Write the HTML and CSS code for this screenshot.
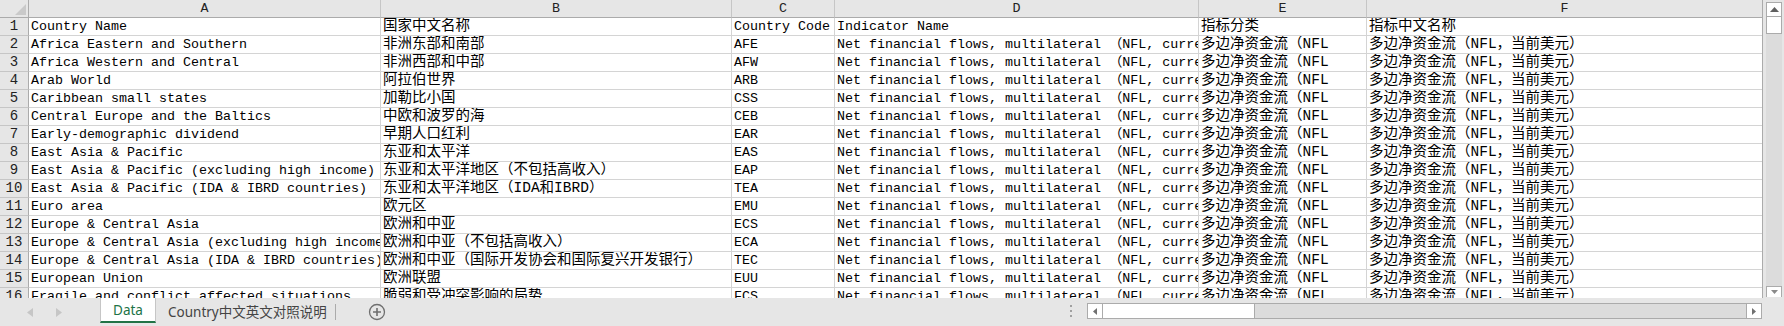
FILE: index.html
```html
<!DOCTYPE html>
<html lang="zh-CN">
<head>
    <meta charset="UTF-8">
    <title>Data - 多边净资金流</title>
    <link rel="stylesheet" href="styles.css">
</head>
<body>
    <div class="sheet">
        <div class="grid-area">
            <div class="grid">
                <table class="cells">
                    <colgroup>
                        <col class="col-rh">
                        <col class="col-a">
                        <col class="col-b">
                        <col class="col-c">
                        <col class="col-d">
                        <col class="col-e">
                        <col class="col-f">
                    </colgroup>
                    <thead>
                        <tr>
                            <th class="corner">
                                <svg width="11" height="11" viewBox="0 0 11 11"><polygon points="11,0 11,11 0,11" fill="#c9c9c9"/></svg>
                            </th>
                            <th>A</th><th>B</th><th>C</th><th>D</th><th>E</th><th>F</th>
                        </tr>
                    </thead>
                    <tbody>
                        <tr><th>1</th><td>Country Name</td><td class="cn">国家中文名称</td><td>Country Code</td><td>Indicator Name</td><td class="cn">指标分类</td><td class="cn">指标中文名称</td></tr>
                        <tr><th>2</th><td>Africa Eastern and Southern</td><td class="cn">非洲东部和南部</td><td>AFE</td><td>Net financial flows, multilateral （NFL, current US$）</td><td class="cn">多边净资金流（NFL</td><td class="cn">多边净资金流（NFL，当前美元）</td></tr>
                        <tr><th>3</th><td>Africa Western and Central</td><td class="cn">非洲西部和中部</td><td>AFW</td><td>Net financial flows, multilateral （NFL, current US$）</td><td class="cn">多边净资金流（NFL</td><td class="cn">多边净资金流（NFL，当前美元）</td></tr>
                        <tr><th>4</th><td>Arab World</td><td class="cn">阿拉伯世界</td><td>ARB</td><td>Net financial flows, multilateral （NFL, current US$）</td><td class="cn">多边净资金流（NFL</td><td class="cn">多边净资金流（NFL，当前美元）</td></tr>
                        <tr><th>5</th><td>Caribbean small states</td><td class="cn">加勒比小国</td><td>CSS</td><td>Net financial flows, multilateral （NFL, current US$）</td><td class="cn">多边净资金流（NFL</td><td class="cn">多边净资金流（NFL，当前美元）</td></tr>
                        <tr><th>6</th><td>Central Europe and the Baltics</td><td class="cn">中欧和波罗的海</td><td>CEB</td><td>Net financial flows, multilateral （NFL, current US$）</td><td class="cn">多边净资金流（NFL</td><td class="cn">多边净资金流（NFL，当前美元）</td></tr>
                        <tr><th>7</th><td>Early-demographic dividend</td><td class="cn">早期人口红利</td><td>EAR</td><td>Net financial flows, multilateral （NFL, current US$）</td><td class="cn">多边净资金流（NFL</td><td class="cn">多边净资金流（NFL，当前美元）</td></tr>
                        <tr><th>8</th><td>East Asia &amp; Pacific</td><td class="cn">东亚和太平洋</td><td>EAS</td><td>Net financial flows, multilateral （NFL, current US$）</td><td class="cn">多边净资金流（NFL</td><td class="cn">多边净资金流（NFL，当前美元）</td></tr>
                        <tr><th>9</th><td>East Asia &amp; Pacific (excluding high income)</td><td class="cn">东亚和太平洋地区（不包括高收入）</td><td>EAP</td><td>Net financial flows, multilateral （NFL, current US$）</td><td class="cn">多边净资金流（NFL</td><td class="cn">多边净资金流（NFL，当前美元）</td></tr>
                        <tr><th>10</th><td>East Asia &amp; Pacific (IDA &amp; IBRD countries)</td><td class="cn">东亚和太平洋地区（IDA和IBRD）</td><td>TEA</td><td>Net financial flows, multilateral （NFL, current US$）</td><td class="cn">多边净资金流（NFL</td><td class="cn">多边净资金流（NFL，当前美元）</td></tr>
                        <tr><th>11</th><td>Euro area</td><td class="cn">欧元区</td><td>EMU</td><td>Net financial flows, multilateral （NFL, current US$）</td><td class="cn">多边净资金流（NFL</td><td class="cn">多边净资金流（NFL，当前美元）</td></tr>
                        <tr><th>12</th><td>Europe &amp; Central Asia</td><td class="cn">欧洲和中亚</td><td>ECS</td><td>Net financial flows, multilateral （NFL, current US$）</td><td class="cn">多边净资金流（NFL</td><td class="cn">多边净资金流（NFL，当前美元）</td></tr>
                        <tr><th>13</th><td>Europe &amp; Central Asia (excluding high income)</td><td class="cn">欧洲和中亚（不包括高收入）</td><td>ECA</td><td>Net financial flows, multilateral （NFL, current US$）</td><td class="cn">多边净资金流（NFL</td><td class="cn">多边净资金流（NFL，当前美元）</td></tr>
                        <tr><th>14</th><td>Europe &amp; Central Asia (IDA &amp; IBRD countries)</td><td class="cn">欧洲和中亚（国际开发协会和国际复兴开发银行）</td><td>TEC</td><td>Net financial flows, multilateral （NFL, current US$）</td><td class="cn">多边净资金流（NFL</td><td class="cn">多边净资金流（NFL，当前美元）</td></tr>
                        <tr><th>15</th><td>European Union</td><td class="cn">欧洲联盟</td><td>EUU</td><td>Net financial flows, multilateral （NFL, current US$）</td><td class="cn">多边净资金流（NFL</td><td class="cn">多边净资金流（NFL，当前美元）</td></tr>
                        <tr><th>16</th><td>Fragile and conflict affected situations</td><td class="cn">脆弱和受冲突影响的局势</td><td>FCS</td><td>Net financial flows, multilateral （NFL, current US$）</td><td class="cn">多边净资金流（NFL</td><td class="cn">多边净资金流（NFL，当前美元）</td></tr>
                    </tbody>
                </table>
            </div>

            <div class="vscroll">
                <div class="vs-btn">
                    <svg width="9" height="5" viewBox="0 0 9 5"><polygon points="4.5,0 9,5 0,5" fill="#606060"/></svg>
                </div>
                <div class="vs-track">
                    <div class="vs-thumb"></div>
                </div>
                <div class="vs-btn vs-btn-down">
                    <svg width="7" height="4" viewBox="0 0 7 4"><polygon points="0,0 7,0 3.5,4" fill="#8a8a8a"/></svg>
                </div>
            </div>
        </div>

        <div class="tabbar">
            <div class="tab-nav">
                <svg width="6" height="9" viewBox="0 0 6 9"><polygon points="6,0 6,9 0,4.5" fill="#c6c6c6"/></svg>
                <svg width="6" height="9" viewBox="0 0 6 9"><polygon points="0,0 6,4.5 0,9" fill="#c6c6c6"/></svg>
            </div>
            <div class="tab active">Data</div>
            <div class="tab">Country中文英文对照说明</div>
            <div class="tab-sep"></div>
            <div class="tab-add">
                <svg width="18" height="18" viewBox="0 0 18 18">
                    <circle cx="9" cy="9" r="7.5" fill="none" stroke="#6f6f6f" stroke-width="1.3"/>
                    <path d="M9 5v8M5 9h8" stroke="#6f6f6f" stroke-width="1.6"/>
                </svg>
            </div>
            <div class="tab-space"></div>
            <div class="split-dots">
                <span></span><span></span><span></span>
            </div>
            <div class="hscroll">
                <div class="hs-btn">
                    <svg width="4" height="7" viewBox="0 0 4 7"><polygon points="4,0 4,7 0,3.5" fill="#707070"/></svg>
                </div>
                <div class="hs-thumb"></div>
                <div class="hs-track"></div>
                <div class="hs-btn">
                    <svg width="4" height="7" viewBox="0 0 4 7"><polygon points="0,0 4,3.5 0,7" fill="#707070"/></svg>
                </div>
            </div>
        </div>
    </div>
</body>
</html>
```

FILE: styles.css
```css
* {
    margin: 0;
    padding: 0;
    box-sizing: border-box;
}

body {
    background-color: #e6e6e6;
    font-family: 'Liberation Mono', 'Noto Sans CJK SC', monospace;
    font-size: 13.33px;
    color: #000;
}

.sheet {
    width: 1784px;
    height: 326px;
    display: flex;
    flex-direction: column;
}

/* Grid */
.grid-area {
    height: 298px;
    display: flex;
}

.grid {
    width: 1763px;
    height: 298px;
    overflow: hidden;
    background: #fff;
    border-right: 1px solid #ababab;
}

.cells {
    width: 1763px;
    table-layout: fixed;
    border-collapse: separate;
    border-spacing: 0;
}

.col-rh { width: 29px; }
.col-a { width: 352px; }
.col-b { width: 351px; }
.col-c { width: 103px; }
.col-d { width: 364px; }
.col-e { width: 168px; }
.col-f { width: 396px; }

.cells td,
.cells th {
    height: 18px;
    line-height: 17px;
    white-space: nowrap;
    overflow: hidden;
    font-weight: normal;
}

.cells td {
    padding: 0 2px;
    border-right: 1px solid #d4d4d4;
    border-bottom: 1px solid #d4d4d4;
    text-align: left;
}

.cells td.cn {
    font-size: 14.5px;
    line-height: 17px;
}

/* headers */
.cells thead th {
    background: #e6e6e6;
    text-align: center;
    color: #222;
    border-right: 1px solid #c6c6c6;
    border-bottom: 1px solid #ababab;
}

.cells thead th.corner {
    padding: 4px 2px 2px 0;
    border-right: 1px solid #ababab;
}

.corner svg {
    display: block;
    margin-left: auto;
}

.cells tbody th {
    background: #e6e6e6;
    text-align: center;
    color: #222;
    font-size: 14px;
    border-right: 1px solid #ababab;
    border-bottom: 1px solid #c6c6c6;
}

/* Vertical scrollbar */
.vscroll {
    width: 21px;
    padding: 2px 2px 1px 3px;
    display: flex;
    flex-direction: column;
}

.vs-btn {
    height: 15px;
    background: #fff;
    border: 1px solid #ababab;
    display: flex;
    align-items: center;
    justify-content: center;
}

.vs-btn-down {
    height: 11px;
    align-items: flex-start;
    padding-top: 3px;
    border-bottom: none;
}

.vs-track {
    flex: 1;
    background: #dcdcdc;
}

.vs-thumb {
    height: 17px;
    background: #fff;
    border: 1px solid #ababab;
    border-top: none;
}

/* Sheet tabs */
.tabbar {
    height: 28px;
    display: flex;
    align-items: stretch;
    font-family: 'Noto Sans', 'Noto Sans CJK SC', sans-serif;
    font-size: 13.5px;
    color: #444;
}

.tab-nav {
    width: 100px;
    display: flex;
    align-items: center;
    gap: 23px;
    padding-left: 27px;
}

.tab {
    height: 25px;
    padding: 0 8px 0 12px;
    display: flex;
    align-items: center;
    white-space: nowrap;
}

.tab.active {
    width: 56px;
    padding: 0;
    justify-content: center;
    background: #fff;
    color: #217346;
    border-left: 1px solid #c6c6c6;
    border-right: 1px solid #c6c6c6;
    border-bottom: 2px solid #217346;
}

.tab-sep {
    width: 1px;
    height: 16px;
    margin: 6px 0 0 0;
    background: #ababab;
}

.tab-add {
    width: 18px;
    margin-left: 32px;
    display: flex;
    align-items: center;
}

.tab-space {
    flex: 1;
}

.split-dots {
    width: 16px;
    margin-right: 8px;
    display: flex;
    flex-direction: column;
    justify-content: center;
    align-items: center;
    gap: 3px;
    padding-bottom: 2px;
}

.split-dots span {
    width: 2px;
    height: 2px;
    background: #a0a0a0;
}

.hscroll {
    width: 675px;
    height: 16px;
    margin: 5px 22px 0 0;
    display: flex;
    border: 1px solid #ababab;
    background: #dcdcdc;
}

.hs-btn {
    width: 14px;
    background: #fff;
    display: flex;
    align-items: center;
    justify-content: center;
}

.hs-thumb {
    width: 153px;
    background: #fff;
    border-left: 1px solid #ababab;
    border-right: 1px solid #ababab;
}

.hs-track {
    flex: 1;
    border-right: 1px solid #ababab;
}
```
